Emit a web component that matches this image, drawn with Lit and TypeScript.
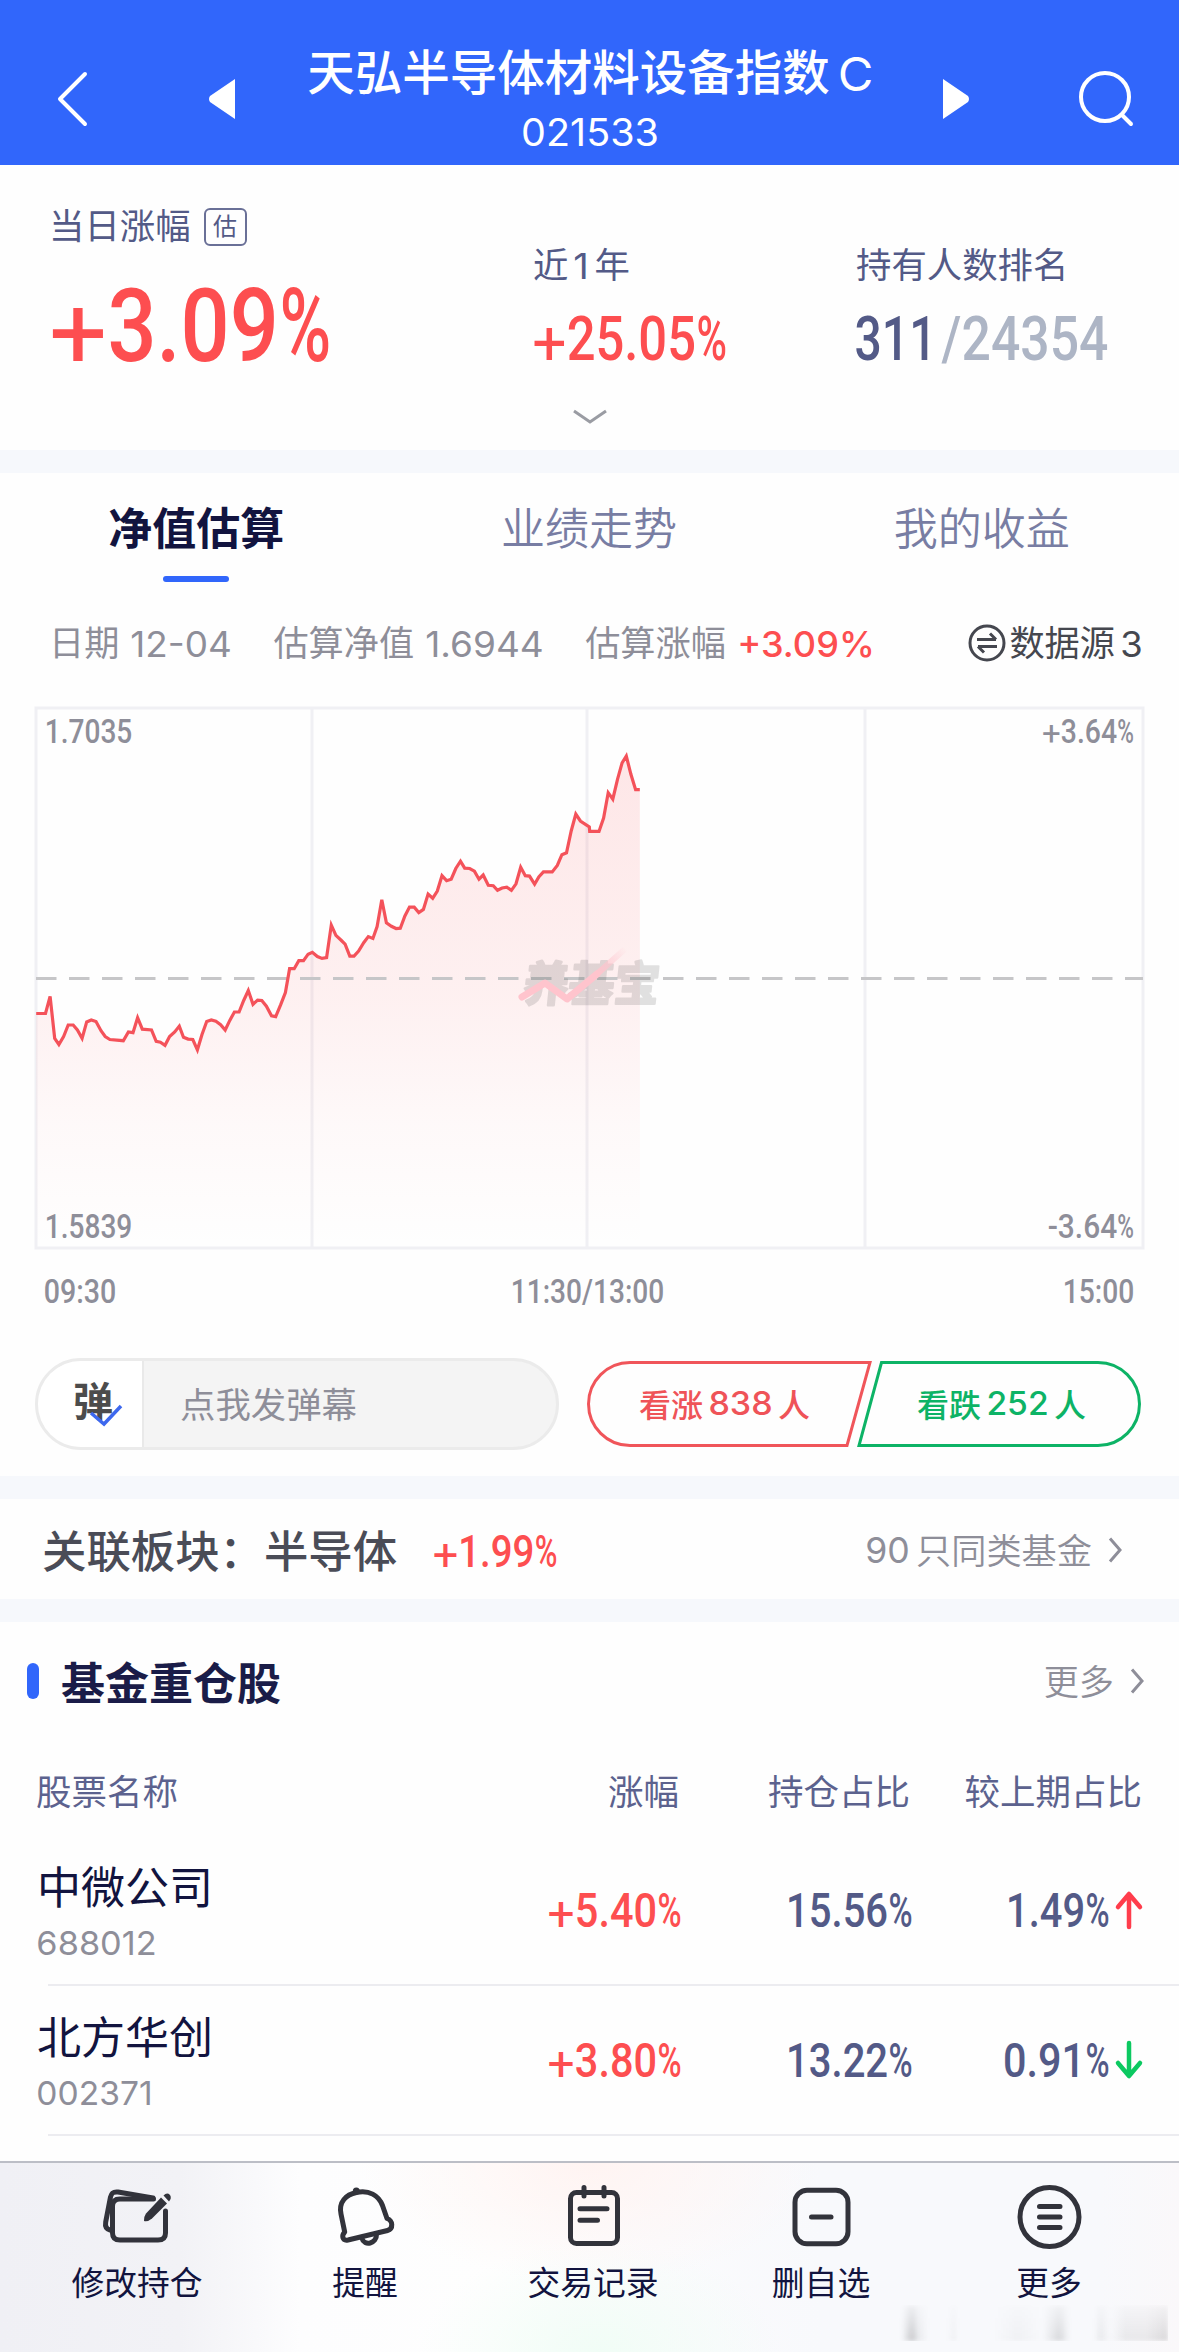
import { LitElement, html, svg, css } from "lit";
import { customElement } from "lit/decorators.js";

/** Digits set at an exact cap height and ink width. */
const num = (text: string, width: number, cap: number, cls = "", family: "din" | "sf" = "din", x = 0, y = 0) => {
  const din = family === "din";
  const size = cap / (din ? 0.711 : 0.727);
  const bear = size * (din ? 0.04 : 0.05);
  const plus = din && text.startsWith("+");
  const pct = din && text.endsWith("%");
  const start = plus ? cap * 0.815 : 0;
  const end = pct ? width - cap * 0.73 : width;
  const body = text.slice(plus ? 1 : 0, pct ? -1 : undefined);
  return html`<svg class="num ${family} ${cls}" x=${x} y=${y} width=${width} height=${cap}>
    ${plus ? svg`<text class="thin" x=${-size * 0.03} y=${cap + size * 0.07} font-size=${size}>+</text>` : ""}
    <text x=${start - bear} y=${cap} font-size=${size} textLength=${end - start + 2 * bear} lengthAdjust="spacingAndGlyphs">${body}</text>
    ${pct ? svg`<text x=${width - cap * 0.665} y=${cap} font-size=${size} textLength=${cap * 0.71} lengthAdjust="spacingAndGlyphs">%</text>` : ""}
  </svg>`;
};

const SERIES: [number, number][] = [
  [86, 767], [108, 767], [119, 722], [130, 832], [140, 848], [151, 827], [162, 797], [174, 797], [184, 810], [195, 832],
  [206, 789], [217, 784], [228, 788], [240, 812], [250, 827], [261, 835], [293, 838], [305, 815], [316, 817], [327, 778],
  [338, 808], [360, 810], [371, 840], [381, 842], [392, 850], [403, 827], [415, 815], [426, 800], [436, 829], [447, 834],
  [458, 835], [469, 862], [480, 822], [491, 788], [502, 784], [513, 787], [524, 796], [535, 810], [546, 785], [557, 763],
  [568, 763], [579, 733], [590, 707], [601, 743], [612, 732], [622, 733], [633, 748], [645, 773], [655, 775], [667, 744],
  [678, 712], [688, 650], [699, 650], [710, 629], [721, 629], [732, 612], [742, 607], [754, 618], [765, 623], [776, 621],
  [787, 536], [798, 563], [810, 575], [820, 586], [831, 617], [841, 617], [852, 604], [864, 582], [875, 566], [886, 571],
  [896, 540], [907, 470], [918, 530], [930, 539], [941, 545], [951, 544], [962, 512], [973, 489], [984, 489], [995, 503],
  [1006, 495], [1017, 455], [1028, 466], [1039, 447], [1050, 407], [1061, 420], [1072, 416], [1083, 388], [1094, 369],
  [1104, 387], [1116, 388], [1127, 395], [1138, 416], [1148, 405], [1160, 432], [1172, 433], [1182, 445], [1193, 439],
  [1204, 437], [1215, 445], [1226, 428], [1237, 385], [1248, 407], [1258, 408], [1270, 429], [1280, 410], [1291, 397],
  [1312, 397], [1324, 380], [1335, 352], [1346, 347], [1357, 290], [1368, 246], [1379, 264], [1400, 279], [1401, 291],
  [1423, 291], [1434, 256], [1445, 190], [1456, 207], [1467, 155], [1478, 112], [1488, 94], [1499, 142], [1510, 182], [1520, 182],
];
const LINE = SERIES.map(([x, y]) => `${(x / 2.3758).toFixed(1)},${(12 + y / 2.6133).toFixed(1)}`).join(" ");

const chevron = (w: number, h: number) => html`<svg class="chev" width=${w} height=${h} viewBox="0 0 ${w} ${h}">
  <path d="M2 1.5L${w - 2} ${h / 2}L2 ${h - 1.5}" /></svg>`;

const STOCKS = [
  { name: "中微公司", code: "688012", cw: 117, chg: "+5.40%", pct: "15.56%", diff: "1.49%", dw: 100, up: true },
  { name: "北方华创", code: "002371", cw: 113, chg: "+3.80%", pct: "13.22%", diff: "0.91%", dw: 103, up: false },
];

const ICONS = {
  edit: svg`<path d="M11 44C7 43 6 40 6.700 36L11.500 11C12.500 6.500 15 5.500 19 6L54 12" /><path d="M54.500 13H21C16 13 13.500 15.500 13.500 20V47C13.500 51.500 16 54 21 54H59C64 54 66.500 51.500 66.500 47V25" />
    <path class="solid" d="M62 11.500L68 17.500L53 32.500Q49 36 45 35Q44.500 31 47 27.500Z" /><path class="solid" d="M64.500 9.500Q68 6 71 9Q73 12 70 15.500Z" />`,
  bell: svg`<path d="M14 28C11.500 16 19 8.500 29.500 6.500C42 4 51.500 9 55.500 19.500L60 32.500C66 34.500 66.500 43 60.500 44.500L21 54C15 55 14.500 49.500 17.700 46Z" /><path d="M35 52.500C37 60.500 50 58 49.500 48" /><circle class="solid" cx="29.300" cy="5" r="3.500" />`,
  list: svg`<rect x="15.500" y="6.500" width="47" height="51" rx="6" /><path d="M29 1.500V10M49 1.500V10M25 22.700H52M25 34.300H42.500" />`,
  minus: svg`<rect x="12" y="4.200" width="53" height="53.500" rx="12" /><path d="M28.500 31H48" />`,
  menu: svg`<circle cx="38.500" cy="31" r="29.500" /><path d="M28.500 20.500H49M28.500 31H49M28.500 41.500H49" />`,
};
const NAV: [keyof typeof ICONS, string][] = [
  ["edit", "修改持仓"], ["bell", "提醒"], ["list", "交易记录"], ["minus", "删自选"], ["menu", "更多"],
];

@customElement("app-root")
export class AppRoot extends LitElement {
  static styles = css`
    :host { display: block; width: 1179px; height: 2352px; overflow: hidden; background: #fefefe;
      font-family: Inter, "Noto Sans CJK SC", sans-serif; color: #12143f; }
    * { box-sizing: border-box; }
    svg { display: block; flex: none; overflow: visible; }
    span { white-space: nowrap; }
    .num text { fill: currentColor; }
    .din text { font-family: Roboto, sans-serif; font-weight: 500; }
    .din text.thin { font-weight: 400; }
    .sf text { font-family: Inter, sans-serif; font-weight: 400; }
    .w5 text { font-weight: 500; }
    .red { color: #fd4e50; }
    .slate { color: #535a87; }
    .pale { color: #adb5c5; }
    .gray { color: #8e8e99; }

    header { height: 165px; background: #3166fb; color: #fff; display: flex; padding: 0 46px 0 56px; }
    .title { display: flex; flex-direction: column; align-items: center; padding-top: 43px; flex: 1; }
    .name { display: flex; align-items: center; gap: 10px; font-size: 47.500px; line-height: 60px; height: 60px; font-weight: 500; }
    .name svg { margin-top: 1px; }
    .code { margin: 15px 0 0 2px; }
    .hicon { margin-top: 70px; }
    .prev { margin: 79px 0 0 118px; }
    .next { margin: 79px 109px 0 0; }

    .summary { height: 285px; position: relative; display: grid; grid-template-columns: 482px 323px 1fr; padding-left: 52px; align-items: start; }
    .lbl { font-size: 35.400px; line-height: 40px; height: 40px; color: #535a87; display: flex; align-items: center; margin-left: -1px; }
    .c1 { padding-top: 42px; }
    .c1 .lbl { margin-left: -3px; }
    .c1 .num { margin-top: 41px; }
    .c2 { padding-top: 81px; }
    .c2 .vals { margin-top: 31px; display: flex; }
    .one { margin: 0 7px; }
    .badge { margin-left: 13px; width: 43px; height: 38px; border: 2px solid #6a7097; border-radius: 6px; font-size: 24px; line-height: 33px; text-align: center; }
    .slash { margin: 0 5px 0 10px; }
    .more { position: absolute; left: 573px; top: 244px; }
    .band { height: 23px; background: #f6f8fc; }

    .tabs { display: grid; grid-template-columns: repeat(3, 1fr); height: 127px; justify-items: center; font-size: 44px; line-height: 56px; padding: 28px 1px 0 0; color: #787da3; font-weight: 350; }
    .tab { display: flex; flex-direction: column; align-items: center; }
    .tab.on { color: #12143f; font-weight: 700; }
    .tab.on::after { content: ""; width: 66px; height: 6px; border-radius: 3px; background: #3166fb; margin-top: 19px; }
    .info { height: 88px; display: flex; align-items: center; padding: 0 38px 2px 49px; font-size: 35.200px; line-height: 40px; color: #8e8e99; }
    .info .g1 { margin-left: 13px; }
    .info .gap { margin-left: 43px; }
    .info .src { margin-left: auto; display: flex; align-items: center; color: #45474f; }
    .src span { margin: 0 7px 0 3px; }
    .info .num { margin-top: 2px; }

    .chart { height: 540px; margin-top: 20px; }
    .mark { font-family: "Noto Sans CJK SC", sans-serif; font-weight: 700; font-size: 47px; fill: #222; stroke: #222; stroke-width: 2.500; stroke-linejoin: round; }
    .times { display: flex; justify-content: space-between; padding: 32px 46px 0 45px; height: 110px; }
    .times .mid { margin-left: -4px; }

    .actions { height: 118px; display: flex; padding-left: 35px; align-items: flex-start; }
    .pill { width: 524px; height: 92px; border: 3px solid #ebebeb; border-radius: 46px; background: #f4f4f4; overflow: hidden; display: flex; align-items: center; font-size: 35.400px; color: #8e8e99; }
    .dm { width: 106px; height: 100%; background: #fff; border-right: 2px solid #e9e9e9; padding-left: 35px; position: relative; color: #4c4c4c; font-weight: 700; font-size: 40px; line-height: 82px; }
    .dm svg { position: absolute; left: 50px; top: 41px; }
    .hint { margin: 0 0 4px 36px; }
    .vote { margin: 3px 0 0 28px; display: grid; }
    .vote > * { grid-area: 1 / 1; }
    .votes { display: flex; height: 84px; align-items: center; font-size: 32px; font-weight: 500; }
    .v { display: flex; align-items: center; gap: 7px; }
    .bull { margin-left: 52px; color: #ef5358; }
    .bear { margin-left: 107px; color: #0db366; }

    .related { height: 100px; display: flex; align-items: center; padding: 0 57px 2px 42px; font-size: 44.400px; color: #4a4c57; font-weight: 500; }
    .related > .num.red { margin: 5px 0 0 37px; }
    .link { margin-left: auto; display: flex; align-items: center; font-size: 35.200px; color: #8e8e99; font-weight: 350; }
    .link .chev { margin-left: 16px; }
    .link .num { margin-top: 3px; }
    .related .link span { margin-left: 8px; }
    .related .chev { margin-top: 3px; }
    .hold .link { margin-top: -3px; }
    .hold .link .chev { margin-top: 3px; }
    .chev path { fill: none; stroke: #8e8e99; stroke-width: 3; }

    .hold { height: 118px; display: flex; align-items: center; padding: 0 35px 0 27px; font-size: 44px; font-weight: 700; color: #1a1c48; }
    .hold::before { content: ""; width: 12px; height: 36px; border-radius: 6px; background: #3166fb; margin-right: 22px; }
    .row { display: grid; grid-template-columns: 480px 163px 231px 1fr; padding: 0 36px 0 37px; justify-items: end; align-items: center; }
    .row > :first-child { justify-self: start; }
    .row.th { font-size: 35.500px; line-height: 40px; color: #5c628e; height: 96px; padding: 9px 37px 0 36px; }
    .stock { height: 150px; padding-bottom: 2px; }
    .stock > :first-child { margin-top: -6px; }
    .nm { display: block; font-size: 44px; line-height: 56px; font-weight: 400; color: #12143f; }
    .nm + .num { margin: 15px 0 0 1px; }
    .diff { display: flex; gap: 7px; align-items: center; }
    .line { height: 2px; margin: -2px 0 0 48px; background: #ececf0; }
    .spacer { height: 25px; }

    nav { height: 191px; border-top: 2px solid #bcbec6; display: grid; grid-template-columns: repeat(5, 228px); padding: 23px 19px 0 23px; position: relative;
      background: radial-gradient(ellipse 230px 120px at 590px 0, #fff4f2 0, rgba(255,244,242,0) 100%), radial-gradient(ellipse 180px 110px at 600px 100%, #f1fdf6 0, rgba(241,253,246,0) 100%),
      linear-gradient(90deg, #f0f0f5 0, #f2f2f6 180px, #fdfdfe 300px, #fefefe 500px, #fbfbfd 660px, #f8f9fc 820px, #f8f9fc 1100px, #faf8fa 100%); }
    .item { display: flex; flex-direction: column; align-items: center; font-size: 32.800px; line-height: 40px; }
    .item svg { fill: none; stroke: #32333b; stroke-width: 5; stroke-linecap: round; stroke-linejoin: round; margin-bottom: 9px; }
    .item .solid { fill: #32333b; stroke: none; }
    .smudge { position: absolute; left: 896px; top: 142px; width: 272px; height: 36px; filter: blur(2px);
      background: linear-gradient(90deg, #0000 2%, #0003 6%, #0001 8%, #0000 12%, #0000 19%, #00000009 21%, #0000 23%, #0000 36%, #00000009 45%, #0000 54%, #0002 60%, #0000 64%, #0000 73%, #0001 75%, #0000 79%, #0001 84%, #0001 92%, #0002 100%);
      mask-image: linear-gradient(180deg, #0003, #000); }
  `;

  render() {
    return html`
      <header>
        <svg class="hicon" width="34" height="58" viewBox="0 0 34 58"><path d="M29 4L4 29L29 54" fill="none" stroke="#fff" stroke-width="4" stroke-linecap="round" stroke-linejoin="round" /></svg>
        <svg class="prev" width="27" height="40"><path d="M27 0V40L2 23Q0 20 2 17Z" fill="#fff" /></svg>
        <div class="title">
          <div class="name"><span>天弘半导体材料设备指数</span>${num("C", 31, 34, "", "sf")}</div>
          <div class="code">${num("021533", 134, 28, "", "sf")}</div>
        </div>
        <svg class="next" width="27" height="40"><path d="M0 0V40L25 23Q27 20 25 17Z" fill="#fff" /></svg>
        <svg class="hicon" width="54" height="58" viewBox="0 0 54 58"><g fill="none" stroke="#fff" stroke-width="4" stroke-linecap="round"><circle cx="26" cy="27" r="24" /><path d="M43 45L52 54" /></g></svg>
      </header>

      <section class="summary">
        <div class="c1">
          <div class="lbl"><span>当日涨幅</span><span class="badge">估</span></div>
          ${num("+3.09%", 276, 73, "red")}
        </div>
        <div class="c2">
          <div class="lbl">近${num("1", 12, 26, "one", "sf")}年</div>
          <div class="vals">${num("+25.05%", 191, 43, "red")}</div>
        </div>
        <div class="c2">
          <div class="lbl">持有人数排名</div>
          <div class="vals">${num("311", 77, 43, "slate")}${num("/", 15, 43, "pale slash")}${num("24354", 142, 43, "pale")}</div>
        </div>
        <svg class="more" width="34" height="16"><path d="M1 2L17 13L33 2" fill="none" stroke="#9a9ca3" stroke-width="3" /></svg>
      </section>
      <div class="band"></div>

      <div class="tabs">
        <div class="tab on">净值估算</div><div class="tab">业绩走势</div><div class="tab">我的收益</div>
      </div>
      <div class="info">
        <span>日期</span><span class="g1">${num("12-04", 98, 25.5, "", "sf")}</span>
        <span class="gap">估算净值</span><span class="g1">${num("1.6944", 115, 25.5, "", "sf")}</span>
        <span class="gap">估算涨幅</span><span class="g1">${num("+3.09%", 134, 25.5, "red w5", "sf")}</span>
        <div class="src">
          <svg width="38" height="38" viewBox="0 0 38 38" fill="none" stroke="#45474f" stroke-width="3"><circle cx="19" cy="19" r="17" /><path d="M9 15.500H28M22 9.500L28 15.500M29 22.500H10M16 28.500L10 22.500" /></svg>
          <span>数据源</span>${num("3", 19, 25.5, "", "sf")}
        </div>
      </div>

      <div class="chart">
        <svg width="1179" height="540" viewBox="0 0 1179 540">
          <defs>
            <linearGradient id="fill" gradientUnits="userSpaceOnUse" x1="0" y1="40" x2="0" y2="540"><stop offset="0" stop-color="#fb5257" stop-opacity=".14" /><stop offset=".5" stop-color="#fb5257" stop-opacity=".08" /><stop offset=".75" stop-color="#fb5257" stop-opacity=".03" /><stop offset="1" stop-color="#fb5257" stop-opacity="0" /></linearGradient>
            <linearGradient id="tail" gradientUnits="userSpaceOnUse" x1="597" y1="266" x2="626" y2="240"><stop offset="0" stop-color="#ffc4cd" /><stop offset="1" stop-color="#ffc4cd" stop-opacity="0" /></linearGradient>
          </defs>
          <g fill="none" stroke="#f0f0f4" stroke-width="3"><rect x="36" y="0" width="1107" height="540" /><path d="M312 0V540M587 0V540M865 0V540" /></g>
          <polygon points="36,540 ${LINE} 640,540" fill="url(#fill)" />
          <path d="M36 270.500H1143" stroke="#c6c6c8" stroke-width="3" stroke-dasharray="20.500 12.500" />
          <g opacity=".13"><text class="mark" transform="translate(522 293) skewX(-6)" textLength="136" lengthAdjust="spacingAndGlyphs">养基宝</text></g>
          <path d="M522 289L545 275L567 291L597 266" fill="none" stroke="#ffc4cd" stroke-width="7" stroke-linecap="round" stroke-linejoin="round" />
          <path d="M597 266L625 241" stroke="url(#tail)" stroke-width="6" />
          <polyline points=${LINE} fill="none" stroke="#f4525a" stroke-width="3.200" />
          ${num("1.7035", 85, 23.5, "gray", "din", 46, 11)}
          ${num("+3.64%", 90, 23.5, "gray", "din", 1043, 11)}
          ${num("1.5839", 85, 23.5, "gray", "din", 46, 506)}
          ${num("-3.64%", 84, 23.5, "gray", "din", 1049, 506)}
        </svg>
      </div>
      <div class="times">${num("09:30", 70, 23, "gray")}${num("11:30/13:00", 151, 23, "gray mid")}${num("15:00", 69, 23, "gray")}</div>

      <div class="actions">
        <div class="pill">
          <div class="dm">弹<svg width="36" height="26"><path d="M3 11L16 22L33 4" fill="none" stroke="#3d68ee" stroke-width="3.500" /></svg></div>
          <span class="hint">点我发弹幕</span>
        </div>
        <div class="vote">
          <svg width="555" height="86" fill="none" stroke-width="3"><path d="M43 1.500H283L260 84.500H43A41.500 41.500 0 0 1 43 1.500Z" stroke="#f0555a" /><path d="M294.500 1.500H511A41.500 41.500 0 0 1 511 84.500H272Z" stroke="#0db366" /></svg>
          <div class="votes">
            <div class="v bull">看涨${num("838", 61, 23.5, "w5", "sf")}人</div>
            <div class="v bear">看跌${num("252", 59, 23.5, "w5", "sf")}人</div>
          </div>
        </div>
      </div>
      <div class="band"></div>

      <div class="related">
        <span>关联板块：半导体</span>${num("+1.99%", 122, 32, "red")}
        <div class="link">${num("90", 41, 26, "", "sf")}<span>只同类基金</span>${chevron(14, 26)}</div>
      </div>
      <div class="band"></div>

      <div class="hold"><span>基金重仓股</span><div class="link"><span>更多</span>${chevron(14, 26)}</div></div>
      <div class="row th"><span>股票名称</span><span>涨幅</span><span>持仓占比</span><span>较上期占比</span></div>
      ${STOCKS.map((s) => html`
        <div class="row stock">
          <div><span class="nm">${s.name}</span>${num(s.code, s.cw, 24, "gray", "sf")}</div>
          ${num(s.chg, 131, 34, "red")}${num(s.pct, 123, 34, "slate")}
          <div class="diff">${num(s.diff, s.dw, 34, "slate")}
            <svg width="28" height="38" viewBox="0 0 28 38"><path transform=${s.up ? "" : "rotate(180 14 19)"} d="M14 36V4M3 16L14 3L25 16" fill="none" stroke=${s.up ? "#ff3d4c" : "#0cc961"} stroke-width="4.500" stroke-linecap="round" stroke-linejoin="round" /></svg>
          </div>
        </div>
        <div class="line"></div>`)}
      <div class="spacer"></div>

      <nav>
        ${NAV.map(([icon, label]) => html`<div class="item"><svg width="76" height="68" viewBox="0 0 76 68">${ICONS[icon]}</svg>${label}</div>`)}
        <div class="smudge"></div>
      </nav>
    `;
  }
}
